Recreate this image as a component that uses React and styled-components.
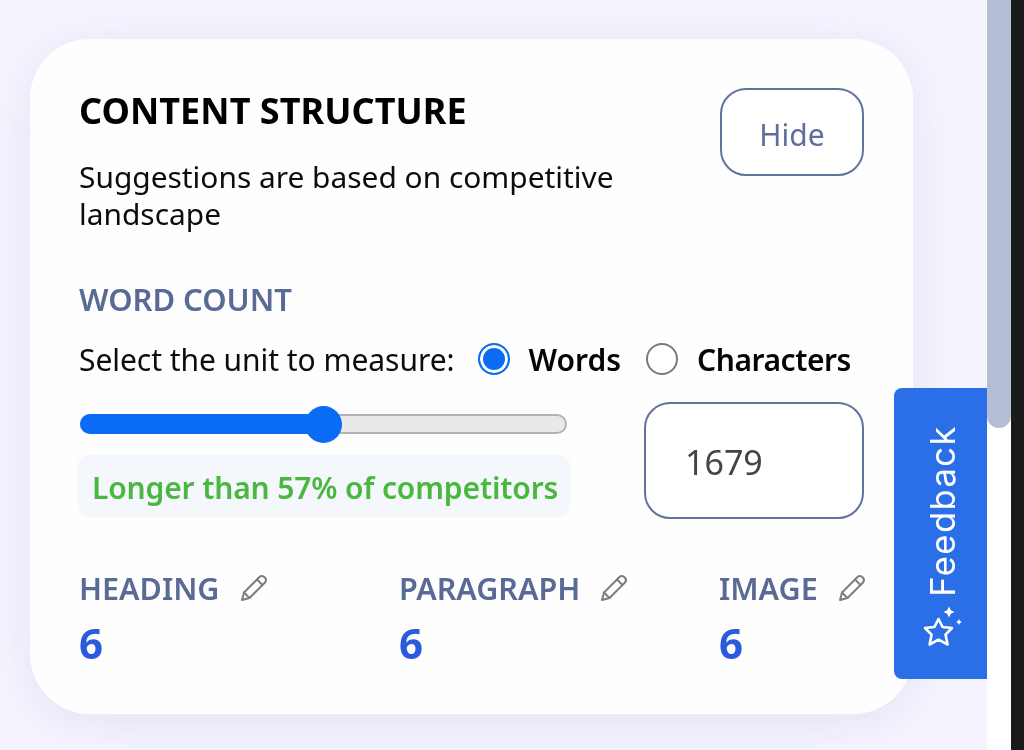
import React from "react";
import styled, { createGlobalStyle } from "styled-components";

const Global = createGlobalStyle`
  html, body { margin: 0; padding: 0; background: #f5f4fe; }
  * { box-sizing: border-box; }
`;

const Screen = styled.div`
  display: flex;
  width: 1024px;
  height: 750px;
  overflow: hidden;
  font-family: "Noto Sans", "Open Sans", sans-serif;
  filter: blur(0.5px);
`;

const Main = styled.main`
  position: relative;
  flex: 0 0 987px;
  width: 987px;
  min-width: 0;
  padding: 39px 74px 0 30px;
  background: #f5f4fe;
`;

const Card = styled.section`
  height: 675px;
  padding: 49px 49px 0;
  background: #fffefe;
  border-radius: 60px;
  box-shadow: 0 8px 44px rgba(185, 190, 228, 0.32);
`;

const Header = styled.header`
  display: flex;
  justify-content: space-between;
  align-items: flex-start;
  height: 191px;
`;

const Intro = styled.div`
  width: 570px;
`;

const Title = styled.h1`
  margin: 0 0 24px;
  font-size: 36px;
  line-height: 46px;
  font-weight: 700;
  color: #000;
  letter-spacing: 0.05px;
  white-space: nowrap;
`;

const Subtitle = styled.p`
  margin: 0;
  font-size: 29.9px;
  line-height: 37px;
  color: #0c0c0c;
`;

const HideButton = styled.button`
  width: 144px;
  height: 88px;
  padding: 4px 0 0;
  border: 2px solid #64739e;
  border-radius: 26px;
  background: #fff;
  color: #5f6f9b;
  font: 400 30px "Noto Sans", sans-serif;
`;

const SectionLabel = styled.h2`
  margin: 0;
  font-size: 31px;
  line-height: 40px;
  font-weight: 600;
  color: #5a6a96;
  letter-spacing: -0.05px;
`;

const UnitRow = styled.div`
  display: flex;
  align-items: center;
  gap: 25px;
  height: 44px;
  margin-top: 18px;
  white-space: nowrap;
`;

const UnitPrompt = styled.span`
  font-size: 30px;
  color: #0c0c0c;
  letter-spacing: -0.05px;
  margin-right: -2px;
`;

const RadioOption = styled.label`
  display: flex;
  align-items: center;
  gap: 19px;
`;

const Radio = styled.span`
  flex: none;
  width: 32px;
  height: 32px;
  border-radius: 50%;
  border: 2px solid ${(p) => (p.$on ? "#0a6cf5" : "#7a7a7a")};
  background: ${(p) => (p.$on ? "#0a6cf5" : "#fff")};
  box-shadow: ${(p) => (p.$on ? "inset 0 0 0 3px #fff" : "none")};
`;

const RadioLabel = styled.span`
  font-size: 30px;
  font-weight: 600;
  color: #050505;
  letter-spacing: ${(p) => (p.$tight ? "-0.45px" : "0")};
`;

const MeasureRow = styled.div`
  display: flex;
  justify-content: space-between;
  margin-top: 21px;
`;

const SliderColumn = styled.div`
  width: 492px;
  padding-top: 12px;
  margin-left: -1px;
`;

const Track = styled.div`
  position: relative;
  height: 20px;
  margin: 0 3px 0 2px;
  background: #e9e9e9;
  border: 2px solid #b2b2b2;
  border-radius: 10px;
`;

const Fill = styled.div`
  position: absolute;
  left: -2px;
  top: -2px;
  bottom: -2px;
  background: #0a6cf5;
  border-radius: 10px 0 0 10px;
`;

const Thumb = styled.div`
  position: absolute;
  top: 50%;
  width: 37px;
  height: 37px;
  margin: -18.5px 0 0 -18.5px;
  border-radius: 50%;
  background: #0a6cf5;
`;

const Verdict = styled.div`
  margin-top: 21px;
  height: 62px;
  padding: 3px 14px 0;
  display: flex;
  align-items: center;
  border-radius: 11px;
  background: #f4f7fc;
  color: #4ab83e;
  font-size: 30px;
  font-weight: 600;
  letter-spacing: -0.15px;
  white-space: nowrap;
`;

const CountBox = styled.div`
  width: 220px;
  height: 117px;
  display: flex;
  align-items: center;
  padding: 3px 0 0 39px;
  border: 2px solid #64739e;
  border-radius: 26px;
  background: #fff;
  color: #444;
  font-size: 34px;
`;

const Stats = styled.div`
  display: grid;
  grid-template-columns: 320px 320px 1fr;
  margin-top: 46px;
`;

const Stat = styled.div`
  display: flex;
  flex-direction: column;
`;

const StatHead = styled.div`
  display: flex;
  align-items: center;
  height: 46px;
`;

const StatName = styled.span`
  font-size: 30.5px;
  font-weight: 600;
  color: #5a6a96;
  margin-right: 19px;
`;

const StatValue = styled.span`
  font-size: 42px;
  line-height: 50px;
  font-weight: 700;
  color: #2a5bdc;
  margin-top: 7px;
`;

const Pencil = styled.svg`
  width: 30px;
  height: 30px;
  flex: none;
  fill: none;
  stroke: #7d7d7d;
  stroke-width: 2;
  stroke-linejoin: round;
  stroke-linecap: round;
`;

const ScrollColumn = styled.div`
  flex: 0 0 24px;
  background: #fff;
`;

const ScrollThumb = styled.div`
  height: 428px;
  background: #b5bdd4;
  border-radius: 0 0 12px 12px;
`;

const DarkEdge = styled.div`
  flex: 1;
  background: #1a1a1a;
`;

const FeedbackTab = styled.button`
  position: absolute;
  right: 0;
  top: 388px;
  width: 93px;
  height: 291px;
  display: flex;
  flex-direction: column;
  align-items: center;
  justify-content: flex-end;
  gap: 8px;
  padding: 0 0 32px;
  border: 0;
  border-radius: 8px 0 0 8px;
  background: #2a6fe8;
  color: #fff;
`;

const FeedbackText = styled.span`
  writing-mode: vertical-rl;
  transform: rotate(180deg);
  margin-left: 6px;
  font: 400 34.5px/1 Inter, sans-serif;
  letter-spacing: 1.5px;
`;

const StarIcon = styled.svg`
  width: 40px;
  height: 42px;
  flex: none;
  margin-left: 5px;
`;

const PencilIcon = () => (
  <Pencil viewBox="0 0 30 30">
    <path d="M3 27 L5 19.5 L20.5 4 Q23 1.8 25.6 4.2 Q28.2 6.8 26 9.5 L10.5 25 Z" />
    <path d="M5 19.5 L10.5 25" />
    <path d="M18 6.5 L23.5 12" />
  </Pencil>
);

const stats = [
  { name: "HEADING", value: 6 },
  { name: "PARAGRAPH", value: 6 },
  { name: "IMAGE", value: 6 },
];

export default function App() {
  const sliderShare = 50;
  return (
    <>
      <Global />
      <Screen>
        <Main>
          <Card>
            <Header>
              <Intro>
                <Title>CONTENT STRUCTURE</Title>
                <Subtitle>Suggestions are based on competitive landscape</Subtitle>
              </Intro>
              <HideButton>Hide</HideButton>
            </Header>
            <SectionLabel>WORD COUNT</SectionLabel>
            <UnitRow>
              <UnitPrompt>Select the unit to measure:</UnitPrompt>
              <RadioOption>
                <Radio $on />
                <RadioLabel>Words</RadioLabel>
              </RadioOption>
              <RadioOption>
                <Radio />
                <RadioLabel $tight>Characters</RadioLabel>
              </RadioOption>
            </UnitRow>
            <MeasureRow>
              <SliderColumn>
                <Track>
                  <Fill style={{ width: `${sliderShare}%` }} />
                  <Thumb style={{ left: `${sliderShare}%` }} />
                </Track>
                <Verdict>Longer than 57% of competitors</Verdict>
              </SliderColumn>
              <CountBox>1679</CountBox>
            </MeasureRow>
            <Stats>
              {stats.map((s) => (
                <Stat key={s.name}>
                  <StatHead>
                    <StatName>{s.name}</StatName>
                    <PencilIcon />
                  </StatHead>
                  <StatValue>{s.value}</StatValue>
                </Stat>
              ))}
            </Stats>
          </Card>
          <FeedbackTab>
            <FeedbackText>Feedback</FeedbackText>
            <StarIcon viewBox="0 0 40 42">
              <path
                d="M15.5 14 L19.6 22 L29 23 L22.5 29.6 L24.6 39.5 L15.5 34.6 L6.6 39.5 L8.6 29.6 L2 23 L11.4 22 Z"
                fill="none"
                stroke="#fff"
                strokeWidth="2.6"
                strokeLinejoin="round"
              />
              <path d="M26 1.5 L27.8 5.2 L31.5 7 L27.8 8.8 L26 12.5 L24.2 8.8 L20.5 7 L24.2 5.2 Z" fill="#fff" />
              <path d="M36 14 L37 16 L39 17 L37 18 L36 20 L35 18 L33 17 L35 16 Z" fill="#fff" />
            </StarIcon>
          </FeedbackTab>
        </Main>
        <ScrollColumn>
          <ScrollThumb />
        </ScrollColumn>
        <DarkEdge />
      </Screen>
    </>
  );
}
